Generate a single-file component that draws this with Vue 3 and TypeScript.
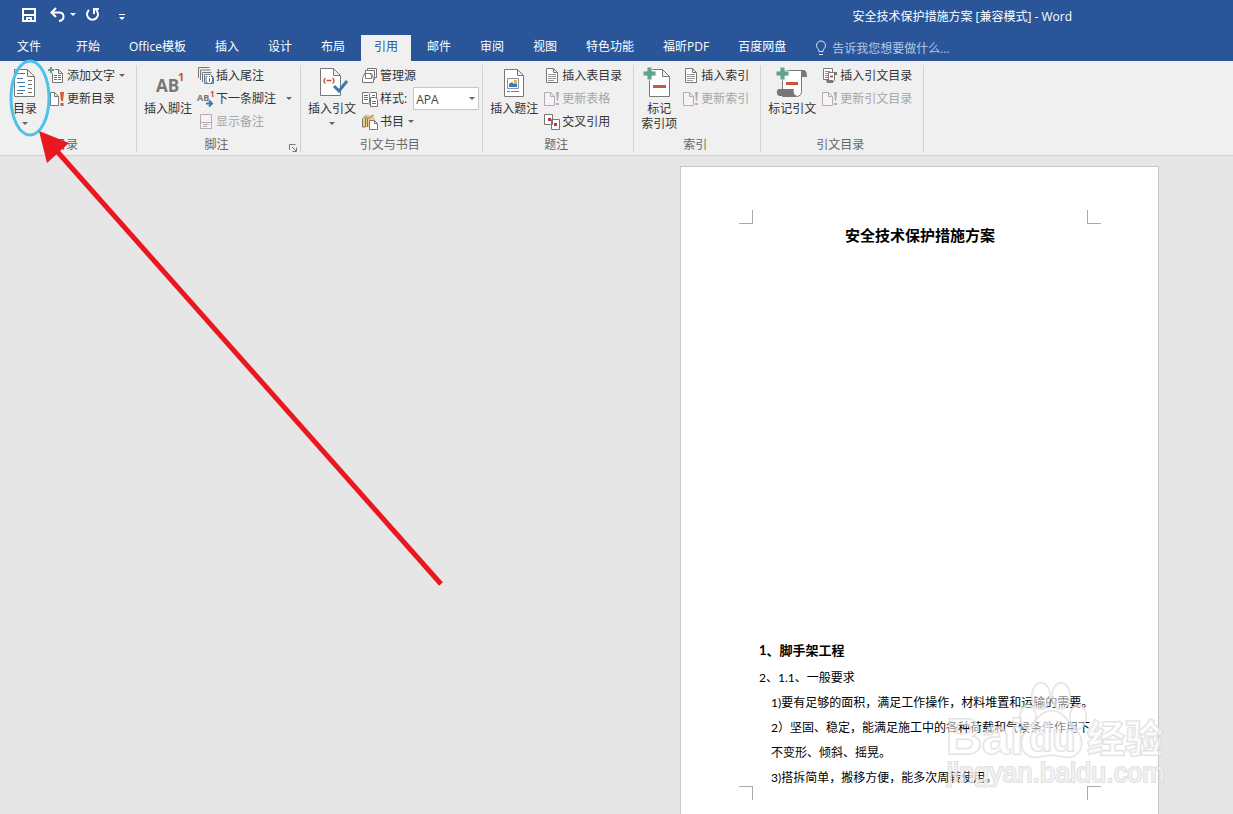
<script setup lang="ts">
import { ref } from 'vue'

interface Shape {
  d?: string
  fill?: string
  stroke?: string
  width?: number
  text?: string
  x?: number
  y?: number
  size?: number
}
interface SmallItem {
  label: string
  icon: string
  disabled?: boolean
  caret?: boolean
  wide?: boolean
  select?: boolean
}
interface Group {
  name: string
  big: { lines: string[]; icon: string; caret?: boolean }
  items: SmallItem[]
  launcher?: boolean
}

const gray = '#777'
const pale = '#b3adb3'
const red = '#c8553d'
const green = '#5fa58c'
const blue = '#3f78b0'

const icons: Record<string, Shape[]> = {
  toc: [
    { d: 'M5.5 2.5h13l7 7v20h-20z M18.5 2.5v7h7', fill: '#fff', stroke: gray },
    { d: 'M8 6.5h8M8 11.5h6M8 15.5h8M10 19.5h6M8 23.5h8M8 26.5h6', stroke: blue },
    { d: 'M19 13.5h4M19 17.5h4M19 21.5h4M19 25.5h4', stroke: gray },
  ],
  footnote: [
    { text: 'AB', x: 4, y: 25, size: 17, fill: gray },
    { text: '1', x: 26, y: 14, size: 11, fill: red },
  ],
  citation: [
    { d: 'M4.5 1.5h13l7 7v20h-20z M17.5 1.5v7h7', fill: '#fff', stroke: gray },
    { d: 'M9.5 11c-2 1.500-2 4 0 5.500M16.5 11c2 1.500 2 4 0 5.500M10.500 13.500h5', stroke: red, width: 1.5 },
    { d: 'M18 19l5 5 8-10', stroke: blue, width: 3 },
  ],
  caption: [
    { d: 'M6.5 2.5h13l6 6v21h-19z M19.5 2.5v6h6', fill: '#fff', stroke: gray },
    { d: 'M9.5 11.5h11v10h-11z', fill: '#fff', stroke: '#8496aa' },
    { d: 'M11 20v-3l3-2 2 2 2-1 1 1v3z', fill: blue },
    { d: 'M16 13h3v3h-3z', fill: '#e8b44c' },
    { d: 'M9 24.5h3M13 24.5h8', stroke: red },
  ],
  markIndex: [
    { d: 'M6.5 2.5h13l7 7v20h-20z M19.5 2.5v7h7', fill: '#fff', stroke: gray },
    { d: 'M4 0h5v4h4v5h-4v4h-5v-4h-4v-5h4z', fill: green, stroke: '#f0f0f0' },
    { d: 'M10 19.5h13', stroke: red, width: 3 },
  ],
  markCitation: [
    { d: 'M6.5 3.500h19v21c0 3-2 5-5 5h-14z', fill: '#fff', stroke: gray },
    { d: 'M22 3h5c3 0 4 2 4 7h-5v-3c0-2-1-4-4-4z', fill: gray },
    { d: 'M3 22h15c-1 3 0 6 3 7h-17c-4 0-4-7-1-7z', fill: gray },
    { d: 'M4 0h5v4h4v5h-4v4h-5v-4h-4v-5h4z', fill: green, stroke: '#f0f0f0' },
    { d: 'M10 16.5h12', stroke: red, width: 3 },
  ],
  addText: [
    { d: 'M3.5 1.5h6l4 4v9h-10z M9.5 1.5v4h4', fill: '#fff', stroke: gray },
    { d: 'M5 7.5h3M9 7.5h3M5 9.5h3M9 9.5h3M5 11.5h3M9 11.5h3', stroke: blue },
    { d: 'M0 -1h6v6h-6z', fill: '#f0f0f0' },
    { d: 'M2 -1v6M-1 2h6', stroke: green, width: 2 },
  ],
  update: [
    { d: 'M1.5 1.5h4l4 4v9h-8z M5.5 1.5v4h4', fill: '#fff', stroke: gray },
    { d: 'M11 1h4l-1 9h-2z M11.500 12h3v3h-3z', fill: '#d2573c' },
  ],
  updateOff: [
    { d: 'M.5 1.5h6l4 4v9h-10z M6.5 1.5v4h4', fill: '#f8f2f8', stroke: pale },
    { d: 'M12 1h3l-1 9h-1z M12 12h3v2h-3z', fill: pale },
  ],
  endnote: [
    { d: 'M.5 10v-10.500h11M2.500 12v-10h10M4.500 14v-9.500h9', stroke: gray },
    { d: 'M6.500 15.500v-9h6l3 3v6z', fill: '#fff', stroke: gray },
    { d: 'M9.500 8.500h-1.500v6h1.500M13 8.500h1.500v6h-1.500M11.500 8v1M11.500 10v4', stroke: blue },
  ],
  nextNote: [
    { text: 'AB', x: -1, y: 10, size: 9, fill: gray },
    { text: '1', x: 12, y: 6, size: 8, fill: red },
    { d: 'M8 12.5h6M11 9.500l3 3-3 3', stroke: blue, width: 2 },
  ],
  showNotes: [
    { d: 'M2.5 .5h11v14h-11z M2.5 8.5h11', fill: '#f8f2f8', stroke: pale },
    { d: 'M5 10.5h6M5 12.5h4', stroke: pale },
  ],
  sources: [
    { d: 'M5.5 3v-2.500h9v9h-2M3.5 5v-2.500h9v9h-2', fill: '#fff', stroke: gray },
    { d: 'M.5 10.5l2-5h7l2 5v4h-11z', fill: '#fff', stroke: gray },
    { d: 'M3.5 10.5v-5h4l2 2v3z', fill: '#fff', stroke: gray },
  ],
  styles: [
    { d: 'M.5 1.5h6l1 1 1-1h6v11h-6l-1 1-1-1h-6z M7.500 2.500v10', fill: '#fff', stroke: gray },
    { d: 'M2 4.5h4M2 6.5h4M2 8.5h4M10 4.5h3', stroke: blue },
    { d: 'M8.5 6.5h5l2 2v7h-7z', fill: '#fff', stroke: gray },
    { d: 'M10 10.5h4M10 12.5h4', stroke: blue },
  ],
  bibliography: [
    { d: 'M1 4.500l4-3.500h6l2 3v9h-12z', fill: '#e9cd8d' },
    { d: 'M.5 4.500l4-3.500M.5 5v8h3v-9h4l4-3M5.500 5v8', stroke: gray },
    { d: 'M7.5 6.500h5l3 3v6h-8z M12.500 6.500v3h3', fill: '#fff', stroke: gray },
  ],
  list: [
    { d: 'M2.5 .5h7l4 4v10h-11z M9.5 .5v4h4', fill: '#fff', stroke: gray },
    { d: 'M4 6.5h8M4 8.5h8M4 10.5h8M4 12.5h6', stroke: '#999' },
  ],
  crossRef: [
    { d: 'M.5 .5h8v10h-8z M7.5 5.5h8v10h-8z', fill: '#fff', stroke: gray },
    { d: 'M4 5.500h3M10 10.500h3', stroke: '#b93a38', width: 3 },
  ],
  authorities: [
    { d: 'M1.5 .5h9v11h-9z', fill: '#fff', stroke: gray },
    { d: 'M3 3.5h5M3 5.5h3M3 7.5h3M3 9.5h3', stroke: '#8b8b8b' },
    { d: 'M6.5 4.500h6v8l-2 2h-4z', fill: '#fff', stroke: gray },
    { d: 'M11 4h4v3h-2v-2zM4 12h7v3h-6z', fill: gray },
    { d: 'M8 8.500h3', stroke: red, width: 2 },
  ],
}

const tabs = ['开始', 'Office模板', '插入', '设计', '布局', '引用', '邮件', '审阅', '视图', '特色功能', '福昕PDF', '百度网盘']
const activeTab = ref('引用')
const citationStyle = ref('APA')

const groups: Group[] = [
  {
    name: '目录',
    big: { lines: ['目录'], icon: 'toc', caret: true },
    items: [
      { label: '添加文字', icon: 'addText', caret: true },
      { label: '更新目录', icon: 'update' },
    ],
  },
  {
    name: '脚注',
    big: { lines: ['插入脚注'], icon: 'footnote' },
    items: [
      { label: '插入尾注', icon: 'endnote' },
      { label: '下一条脚注', icon: 'nextNote', caret: true, wide: true },
      { label: '显示备注', icon: 'showNotes', disabled: true },
    ],
    launcher: true,
  },
  {
    name: '引文与书目',
    big: { lines: ['插入引文'], icon: 'citation', caret: true },
    items: [
      { label: '管理源', icon: 'sources' },
      { label: '样式:', icon: 'styles', select: true },
      { label: '书目', icon: 'bibliography', caret: true },
    ],
  },
  {
    name: '题注',
    big: { lines: ['插入题注'], icon: 'caption' },
    items: [
      { label: '插入表目录', icon: 'list' },
      { label: '更新表格', icon: 'updateOff', disabled: true },
      { label: '交叉引用', icon: 'crossRef' },
    ],
  },
  {
    name: '索引',
    big: { lines: ['标记', '索引项'], icon: 'markIndex' },
    items: [
      { label: '插入索引', icon: 'list' },
      { label: '更新索引', icon: 'updateOff', disabled: true },
    ],
  },
  {
    name: '引文目录',
    big: { lines: ['标记引文'], icon: 'markCitation' },
    items: [
      { label: '插入引文目录', icon: 'authorities' },
      { label: '更新引文目录', icon: 'updateOff', disabled: true },
    ],
  },
]
</script>

<template>
  <div class="app">
    <header class="header">
      <div class="titlebar">
        <div class="quick">
          <button class="quick-btn" aria-label="保存">
            <svg width="16" height="16" viewBox="0 0 16 16">
              <path d="M2 2h12v12h-12z" fill="none" stroke="#fff" stroke-width="2" />
              <path d="M3 7h10v2h-10z M5 10h6v5h-2v-3h-2v3h-2z" fill="#fff" />
            </svg>
          </button>
          <button class="quick-btn undo" aria-label="撤消">
            <svg width="26" height="16" viewBox="0 0 26 16">
              <path d="M2 5.5h7c6 0 6 8 0 8.500M6 1L1.5 5.500 6 10" fill="none" stroke="#fff" stroke-width="2" />
              <path d="M20 6h6l-3 3z" fill="#fff" />
            </svg>
          </button>
          <button class="quick-btn" aria-label="重复">
            <svg width="16" height="16" viewBox="0 0 16 16">
              <path d="M4 3a5.500 5.500 0 1 0 7 0" fill="none" stroke="#fff" stroke-width="2" />
              <path d="M9 7V2h5" fill="none" stroke="#fff" stroke-width="2" />
            </svg>
          </button>
          <button class="quick-btn more" aria-label="自定义快速访问工具栏">
            <svg width="8" height="8" viewBox="0 0 8 8"><path d="M1 1.5h6" stroke="#fff" /><path d="M1 4h6l-3 3z" fill="#fff" /></svg>
          </button>
        </div>
        <div class="title">安全技术保护措施方案 [兼容模式] - Word</div>
      </div>
      <nav class="tabs">
        <button class="tab file">文件</button>
        <button
          v-for="tab in tabs"
          :key="tab"
          class="tab"
          :class="{ active: tab === activeTab }"
          @click="activeTab = tab"
        >{{ tab }}</button>
        <label class="tell">
          <svg width="12" height="16" viewBox="0 0 12 16">
            <path d="M4 11.5c0-3-2.500-3-2.500-6a4.500 4.500 0 0 1 9 0c0 3-2.500 3-2.500 6z M4 14.5h4" fill="none" stroke="#dde7f5" />
          </svg>
          <input class="tell-input" type="text" placeholder="告诉我您想要做什么..." aria-label="告诉我您想要做什么" />
        </label>
      </nav>
    </header>

    <div class="ribbon">
      <section v-for="group in groups" :key="group.name" class="group">
        <div class="controls">
          <button class="big">
            <svg class="big-icon" width="32" height="32" viewBox="0 0 32 32">
              <template v-for="(s, i) in icons[group.big.icon]" :key="i">
                <text v-if="s.text" class="icon-text" :x="s.x" :y="s.y" :font-size="s.size" :fill="s.fill">{{ s.text }}</text>
                <path v-else :d="s.d" :fill="s.fill ?? 'none'" :stroke="s.stroke ?? 'none'" :stroke-width="s.width ?? 1" />
              </template>
            </svg>
            <span v-for="line in group.big.lines" :key="line" class="big-line">{{ line }}</span>
            <span v-if="group.big.caret" class="big-caret"><i class="caret"></i></span>
          </button>
          <div class="column">
            <component
              :is="item.select ? 'div' : 'button'"
              v-for="item in group.items"
              :key="item.label"
              class="small"
              :disabled="item.disabled || undefined"
            >
              <svg class="small-icon" width="16" height="16" viewBox="0 0 16 16">
                <template v-for="(s, i) in icons[item.icon]" :key="i">
                  <text v-if="s.text" class="icon-text" :x="s.x" :y="s.y" :font-size="s.size" :fill="s.fill">{{ s.text }}</text>
                  <path v-else :d="s.d" :fill="s.fill ?? 'none'" :stroke="s.stroke ?? 'none'" :stroke-width="s.width ?? 1" />
                </template>
              </svg>
              <template v-if="item.select">
                <label class="style-label" for="citation-style">{{ item.label }}</label>
                <span class="select-wrap">
                  <select id="citation-style" v-model="citationStyle" class="style-select">
                    <option>APA</option>
                    <option>Chicago</option>
                    <option>MLA</option>
                  </select>
                  <i class="caret select-caret"></i>
                </span>
              </template>
              <span v-else>{{ item.label }}</span>
              <i v-if="item.caret" class="caret" :class="{ far: item.wide }"></i>
            </component>
          </div>
        </div>
        <div class="group-name">{{ group.name }}</div>
        <button v-if="group.launcher" class="launcher" aria-label="脚注和尾注">
          <svg width="8" height="8" viewBox="0 0 8 8"><path d="M.5 6v-5.500h6M3 3l4 4M7.500 3.500v4h-4" fill="none" stroke="#777" /></svg>
        </button>
      </section>
    </div>

    <main class="workspace">
      <article class="page">
        <div class="marks">
          <span class="mark top-left"></span>
          <span class="mark top-right"></span>
        </div>
        <h1 class="doc-title">安全技术保护措施方案</h1>
        <div class="doc-body">
          <h2 class="doc-heading">1、脚手架工程</h2>
          <p class="line">2、1.1、一般要求</p>
          <p class="line indent">1)要有足够的面积，满足工作操作，材料堆置和运输的需要。</p>
          <p class="line indent">2）坚固、稳定，能满足施工中的各种荷载和气候条件作用下<br />不变形、倾斜、摇晃。</p>
          <p class="line indent">3)搭拆简单，搬移方便，能多次周转使用。</p>
        </div>
        <div class="marks">
          <span class="mark bottom-left"></span>
          <span class="mark bottom-right"></span>
        </div>
        <svg class="watermark" width="228" height="112" viewBox="0 0 228 112">
          <g class="wm-shape">
            <ellipse cx="97" cy="20" rx="9" ry="13" />
            <ellipse cx="117" cy="20" rx="9" ry="13" />
            <ellipse cx="84" cy="41" rx="8" ry="12" />
            <ellipse cx="134" cy="41" rx="8" ry="12" />
            <path d="M108 35c11 0 15 10 23 18 11 11 7 26-5 28-7 1-12-2-18-2s-12 3-19 2c-12-2-16-17-5-28 8-8 13-18 24-18z" />
          </g>
          <text class="wm-text wm-bai" x="2" y="78">Bai</text>
          <text class="wm-text wm-du" x="85" y="75">du</text>
          <text class="wm-text wm-cn" x="143" y="76">经验</text>
          <text class="wm-text wm-url" x="3" y="106">jingyan.baidu.com</text>
        </svg>
      </article>
    </main>

    <svg class="annotation" width="460" height="600" viewBox="0 0 460 600">
      <ellipse cx="30" cy="98" rx="19" ry="37" fill="none" stroke="#4fc0ea" stroke-width="3" />
      <path d="M55 149L441 584" stroke="#ea1620" stroke-width="5" />
      <path d="M39 131L69 143 47 163z" fill="#ea1620" />
    </svg>
  </div>
</template>

<style>
body {
  margin: 0;
}
</style>

<style scoped>
.app {
  position: relative;
  display: flex;
  flex-direction: column;
  min-height: 100vh;
  overflow: hidden;
  background: #e6e6e6;
  font-family: "Open Sans", "Noto Sans CJK SC", sans-serif;
  font-size: 12px;
  color: #333;
}
button {
  padding: 0;
  border: 0;
  background: none;
  font: inherit;
  color: inherit;
  white-space: nowrap;
}
svg {
  display: block;
  flex: none;
}
.header {
  background: #2a5699;
  color: #fff;
}
.titlebar {
  display: flex;
  justify-content: space-between;
  height: 35px;
}
.quick {
  display: flex;
  align-items: center;
  padding: 0 0 5px 21px;
}
.undo {
  margin-left: 13px;
}
.undo + .quick-btn {
  margin-left: 9px;
}
.more {
  margin: 4px 0 0 17px;
}
.title {
  padding-right: 161px;
  line-height: 34px;
}
.tabs {
  display: flex;
  gap: 3px;
  height: 26px;
}
.tab {
  padding: 0 13px 2px;
  line-height: 24px;
}
.tab.file {
  padding: 0 17px 2px;
  margin-right: 2px;
}
.tab.active {
  background: #f0f0f0;
  color: #2a5699;
}
.tell {
  display: flex;
  align-items: center;
  gap: 5px;
  margin-left: 13px;
}
.tell-input {
  width: 140px;
  padding: 0;
  border: 0;
  background: none;
  font: inherit;
  color: #fff;
}
.tell-input::placeholder {
  color: #b3c8e8;
  opacity: 1;
}
.ribbon {
  display: flex;
  height: 94px;
  border-bottom: 1px solid #d2d2d2;
  background: #f0f0f0;
}
.group {
  position: relative;
  display: flex;
  flex-direction: column;
  padding: 3px 12px 0 7px;
}
.group::after {
  content: "";
  position: absolute;
  top: 4px;
  right: 0;
  bottom: 3px;
  width: 1px;
  background: #d2d2d2;
}
.controls {
  display: flex;
  gap: 6px;
}
.big {
  display: flex;
  flex-direction: column;
  align-items: center;
  justify-content: flex-start;
  min-width: 36px;
  height: 70px;
  padding-top: 3px;
}
.big-icon {
  margin-bottom: 2px;
}
.big-line {
  line-height: 15px;
}
.big-caret {
  display: flex;
  align-items: center;
  height: 15px;
}
.icon-text {
  font-family: "Open Sans", sans-serif;
  font-weight: 700;
}
.column {
  display: flex;
  flex-direction: column;
}
.small {
  display: flex;
  align-items: center;
  gap: 2px;
  height: 23px;
  line-height: 23px;
  white-space: nowrap;
}
.small-icon {
  overflow: visible;
}
.small:disabled {
  color: #a6a6a6;
}
.caret {
  border: 3px solid transparent;
  border-top-color: #666;
  border-bottom: 0;
}
.small .caret {
  margin-left: 2px;
}
.small .caret.far {
  margin: 0 -3px 0 8px;
}
.select-wrap {
  position: relative;
  display: flex;
  margin: 0 -8px 0 4px;
}
.style-select {
  width: 66px;
  height: 23px;
  padding: 0 2px;
  border: 1px solid #c6c6c6;
  border-radius: 0;
  appearance: none;
  background: #fff;
  font: inherit;
  color: #444;
}
.select-wrap .select-caret {
  position: absolute;
  top: 10px;
  right: 4px;
  pointer-events: none;
}
.group-name {
  line-height: 22px;
  text-align: center;
  color: #666;
}
.launcher {
  position: absolute;
  right: 4px;
  bottom: 3px;
}
.workspace {
  display: flex;
  flex: 1;
  justify-content: flex-end;
  padding: 10px 74px 0 0;
}
.page {
  position: relative;
  box-sizing: border-box;
  display: flex;
  flex-direction: column;
  width: 479px;
  padding: 43px 57px 0 58px;
  border: 1px solid #c6c6c6;
  border-bottom: 0;
  background: #fff;
  font-family: "Lato", "Noto Sans CJK SC", sans-serif;
  color: #000;
}
.marks {
  display: flex;
  justify-content: space-between;
}
.mark {
  box-sizing: border-box;
  width: 14px;
  height: 14px;
  border: 0 solid #aaa;
}
.top-left {
  border-width: 0 1px 1px 0;
}
.top-right {
  border-width: 0 0 1px 1px;
}
.bottom-left {
  border-width: 1px 1px 0 0;
}
.bottom-right {
  border-width: 1px 0 0 1px;
}
.doc-title {
  margin: 0 0 392px;
  font-size: 15px;
  line-height: 22px;
  text-align: center;
}
.doc-body {
  padding: 0 0 0 20px;
  margin-bottom: -4px;
  white-space: nowrap;
}
.doc-heading {
  margin: 0 0 2px;
  font-size: 13px;
  line-height: 25px;
}
.line {
  margin: 0;
  line-height: 25px;
}
.indent {
  padding-left: 12px;
}
.watermark {
  position: absolute;
  right: -14px;
  top: 509px;
  pointer-events: none;
}
.wm-shape,
.wm-text {
  fill: rgba(255, 255, 255, 0.5);
  stroke: rgba(215, 215, 215, 0.75);
  stroke-width: 2px;
  paint-order: stroke;
}
.wm-text {
  font-family: "Liberation Sans", "Noto Sans CJK SC", sans-serif;
  font-weight: 700;
}
.wm-bai {
  font-size: 50px;
}
.wm-du {
  font-size: 38px;
}
.wm-cn {
  font-size: 38px;
}
.wm-url {
  font-size: 27px;
  font-weight: 400;
}
.annotation {
  position: absolute;
  left: 0;
  top: 0;
  pointer-events: none;
}
</style>
